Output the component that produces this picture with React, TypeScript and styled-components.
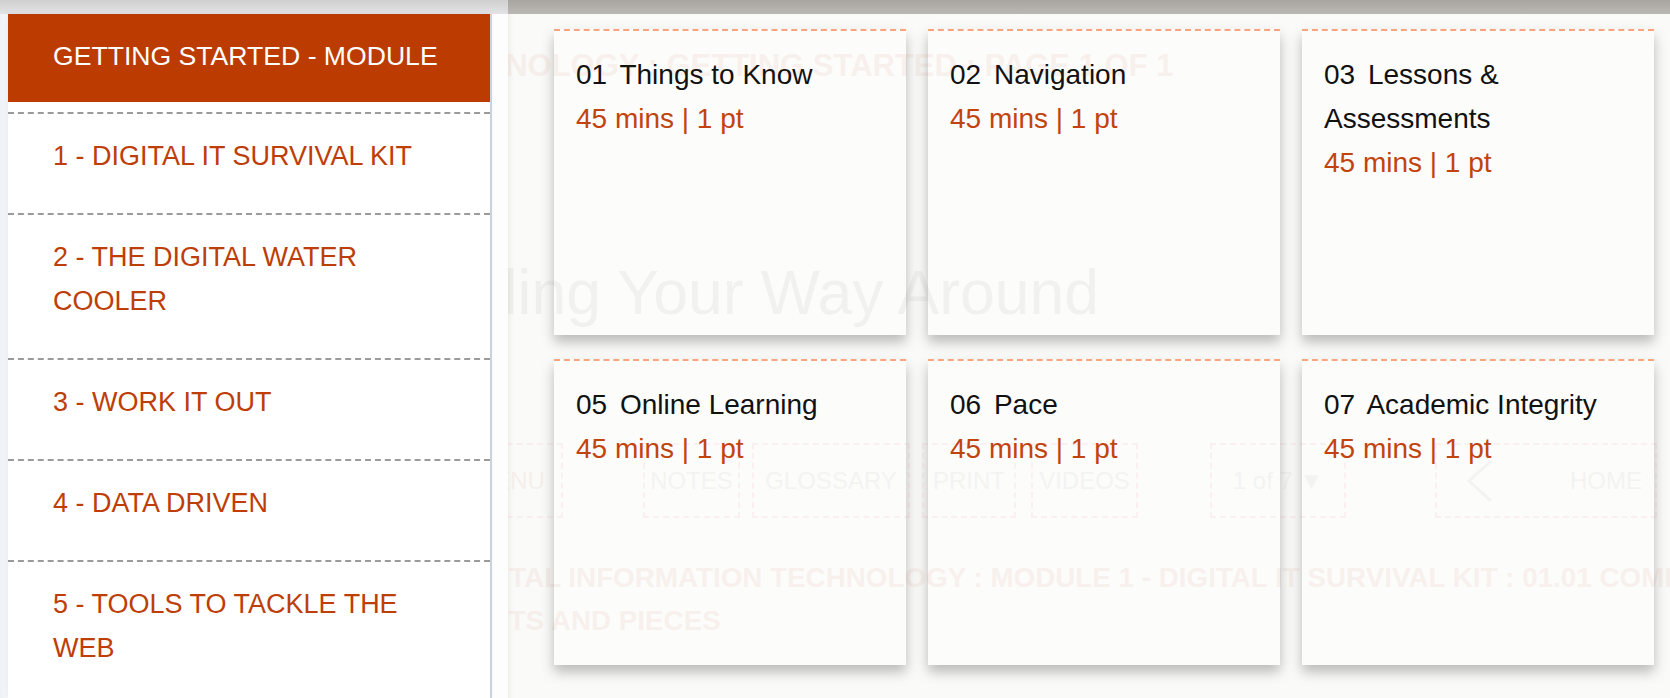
import React from 'react';
import styled, { createGlobalStyle } from 'styled-components';

const GlobalStyle = createGlobalStyle`
  html, body { margin: 0; padding: 0; height: 100%; }
  body {
    font-family: "Liberation Sans", Arial, Helvetica, sans-serif;
    background: #fafaf9;
    overflow: hidden;
  }
  #root { height: 100%; }
  *, *::before, *::after { box-sizing: border-box; }
`;

const Page = styled.div`
  display: flex;
  width: 100vw;
  height: 100vh;
  overflow: hidden;
`;

/* ---------- left menu ---------- */
const LeftPanel = styled.aside`
  width: 508px;
  flex: none;
  display: flex;
  flex-direction: column;
  background: #fdfdfd;
`;

const LeftShade = styled.div`
  height: 14px;
  flex: none;
  background: linear-gradient(#cfcfcf, #e4e4e6);
`;

const SidebarWrap = styled.div`
  flex: 1;
  min-height: 0;
  display: flex;
  padding: 0 16px 0 8px;
  background: linear-gradient(90deg, #eef1f5 0, #fbfcfd 8px, #fdfdfd 100%);
`;

const Sidebar = styled.nav`
  width: 484px;
  display: flex;
  flex-direction: column;
  background: #fff;
  border-right: 2px solid #c9d3e0;
  box-shadow: -2px 0 5px rgba(150, 165, 190, 0.18);
`;

const SidebarHeader = styled.div`
  height: 88px;
  flex: none;
  display: flex;
  align-items: center;
  padding: 0 20px 3px 45px;
  margin-bottom: 10px;
  background: #bb3b00;
  color: #fff;
  font-size: 26.6px;
  white-space: nowrap;
`;

const SidebarItem = styled.a`
  display: block;
  border-top: 2px dashed #9b9b9b;
  padding: 20px 38px 35px 45px;
  font-size: 27px;
  line-height: 44px;
  color: #bd3e06;
  text-decoration: none;
`;

/* ---------- main area ---------- */
const Main = styled.main`
  flex: 1;
  position: relative;
  overflow: hidden;
  display: flex;
  flex-direction: column;
  background: #fafaf9;
  box-shadow: inset 6px 0 6px -6px rgba(0, 0, 0, 0.1);
`;

const TopBar = styled.div`
  height: 14px;
  flex: none;
  background: linear-gradient(#a8a5a1, #bbb8b4);
`;

const TileGrid = styled.div`
  display: grid;
  grid-template-columns: repeat(3, 352px);
  grid-auto-rows: 306px;
  column-gap: 22px;
  row-gap: 24px;
  margin: 15px 0 0 46px;
`;

const Tile = styled.a`
  display: block;
  background: #fcfcfb;
  border-top: 2px dashed #f7a47f;
  box-shadow: 0 7px 12px rgba(0, 0, 0, 0.26);
  padding: 22px 22px;
  font-size: 28px;
  line-height: 44px;
  color: #111;
  text-decoration: none;
`;

const Num = styled.span`
  margin-right: 5px;
`;

const Meta = styled.div`
  color: #c1440e;
`;

/* ---------- faded page behind the overlay ---------- */
const FadeLayer = styled.div`
  position: absolute;
  inset: 0;
  z-index: 2;
  opacity: 0.06;
  pointer-events: none;
  display: flex;
  flex-direction: column;
  align-items: flex-start;
`;

const Crumb = styled.div`
  margin: 48px 0 0 -442px;
  font-size: 31px;
  line-height: 36px;
  font-weight: 700;
  color: #c0440c;
  white-space: nowrap;
`;

const PageTitle = styled.h1`
  margin: 172px 0 0 -112px;
  font-size: 62.5px;
  line-height: 72px;
  font-weight: 400;
  color: #555;
  white-space: nowrap;
`;

const ToolRow = styled.div`
  display: flex;
  flex: none;
  height: 75px;
  margin: 115px 0 0 -52px;
`;

const ToolBtn = styled.div<{ $w: number; $mr: number; $accent?: boolean; $split?: boolean }>`
  flex: none;
  width: ${(p) => p.$w}px;
  margin-right: ${(p) => p.$mr}px;
  border: 2px dashed #e0306a;
  display: flex;
  align-items: center;
  justify-content: ${(p) => (p.$split ? 'space-between' : 'center')};
  padding: ${(p) => (p.$split ? '0 13px 0 28px' : '0')};
  font-size: 24px;
  color: ${(p) => (p.$accent ? '#c0440c' : '#777')};
  white-space: nowrap;
`;

const ModuleTitle = styled.div`
  width: 1380px;
  margin: 38px 0 0 -56px;
  font-size: 27.8px;
  line-height: 43px;
  font-weight: 700;
  color: #c0440c;
`;

const menu = [
  '1 - DIGITAL IT SURVIVAL KIT',
  '2 - THE DIGITAL WATER COOLER',
  '3 - WORK IT OUT',
  '4 - DATA DRIVEN',
  '5 - TOOLS TO TACKLE THE WEB',
];

const tiles = [
  { num: '01', title: 'Things to Know' },
  { num: '02', title: 'Navigation' },
  { num: '03', title: 'Lessons & Assessments' },
  { num: '05', title: 'Online Learning' },
  { num: '06', title: 'Pace' },
  { num: '07', title: 'Academic Integrity' },
];

const tools = [
  { label: 'MENU', w: 107, mr: 80, accent: true },
  { label: 'NOTES', w: 97, mr: 12 },
  { label: 'GLOSSARY', w: 158, mr: 12 },
  { label: 'PRINT', w: 94, mr: 15 },
  { label: 'VIDEOS', w: 107, mr: 72 },
  { label: '1 of 7 ▼', w: 136, mr: 89 },
];

const Chevron = () => (
  <svg width="30" height="44" viewBox="0 0 30 44" fill="none">
    <polyline points="26,2 4,22 26,42" stroke="#777" strokeWidth="3" />
  </svg>
);

export default function App() {
  return (
    <>
      <GlobalStyle />
      <Page>
        <LeftPanel>
          <LeftShade />
          <SidebarWrap>
            <Sidebar>
              <SidebarHeader>GETTING STARTED - MODULE</SidebarHeader>
              {menu.map((m) => (
                <SidebarItem key={m} href="#">
                  {m}
                </SidebarItem>
              ))}
            </Sidebar>
          </SidebarWrap>
        </LeftPanel>
        <Main>
          <TopBar />
          <TileGrid>
            {tiles.map((t) => (
              <Tile key={t.num} href="#">
                <Num>{t.num}</Num> {t.title}
                <Meta>45 mins | 1 pt</Meta>
              </Tile>
            ))}
          </TileGrid>
          <FadeLayer aria-hidden="true">
            <Crumb>DIGITAL INFORMATION TECHNOLOGY : GETTING STARTED : PAGE 1 OF 1</Crumb>
            <PageTitle>Finding Your Way Around</PageTitle>
            <ToolRow>
              {tools.map((t) => (
                <ToolBtn key={t.label} $w={t.w} $mr={t.mr} $accent={t.accent}>
                  {t.label}
                </ToolBtn>
              ))}
              <ToolBtn $w={222} $mr={0} $split>
                <Chevron />
                HOME
              </ToolBtn>
            </ToolRow>
            <ModuleTitle>
              DIGITAL INFORMATION TECHNOLOGY : MODULE 1 - DIGITAL IT SURVIVAL KIT : 01.01 COMPUTER PARTS AND PIECES
            </ModuleTitle>
          </FadeLayer>
        </Main>
      </Page>
    </>
  );
}
